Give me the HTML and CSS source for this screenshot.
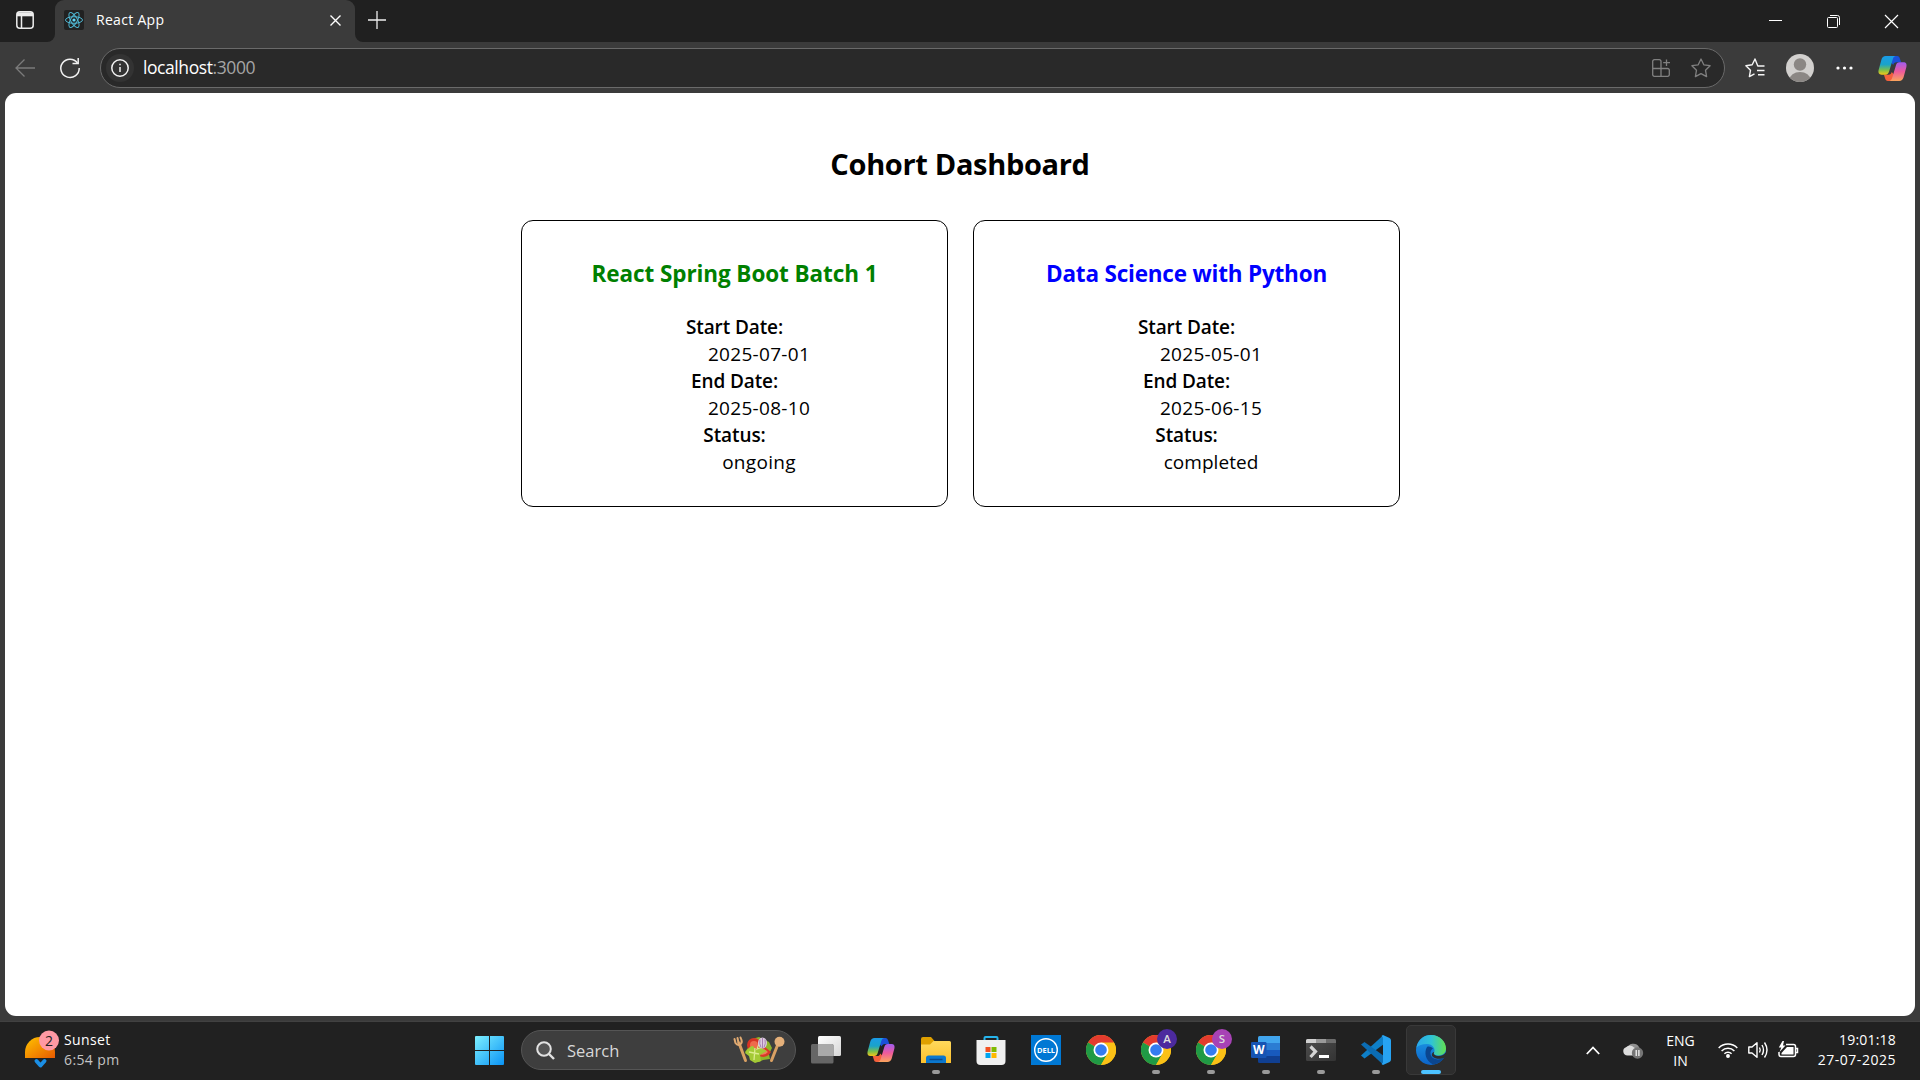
FILE: index.html
```html
<!DOCTYPE html>
<html lang="en">
<head>
<meta charset="utf-8">
<title>React App</title>
<link rel="stylesheet" href="styles.css">
</head>
<body>
<svg width="0" height="0" class="defs">
  <defs>
    <linearGradient id="cpA" x1="0" y1="0" x2="0" y2="1"><stop offset="0" stop-color="#1a9be8"/><stop offset=".45" stop-color="#1aa3c9"/><stop offset=".75" stop-color="#7cbf4a"/><stop offset="1" stop-color="#f5c518"/></linearGradient>
    <linearGradient id="cpB" x1="0" y1="0" x2="0" y2="1"><stop offset="0" stop-color="#a05cf0"/><stop offset=".5" stop-color="#ee5a9c"/><stop offset="1" stop-color="#fba45c"/></linearGradient>
    <linearGradient id="win" x1="0" y1="0" x2="1" y2="1"><stop offset="0" stop-color="#7df0ff"/><stop offset="1" stop-color="#0a93f5"/></linearGradient>
    <linearGradient id="sun" x1="0" y1="0" x2="1" y2="1"><stop offset="0" stop-color="#ffc400"/><stop offset="1" stop-color="#e85a00"/></linearGradient>
    <linearGradient id="fold" x1="0" y1="0" x2="0" y2="1"><stop offset="0" stop-color="#ffd95c"/><stop offset="1" stop-color="#fcc02c"/></linearGradient>
    <linearGradient id="edgeA" x1="0" y1="0" x2="1" y2="0"><stop offset="0" stop-color="#2aa8ea"/><stop offset=".5" stop-color="#2fc3d6"/><stop offset="1" stop-color="#63e04f"/></linearGradient>
    <linearGradient id="edgeB" x1="0" y1="0" x2="0" y2="1"><stop offset="0" stop-color="#1e9de8"/><stop offset="1" stop-color="#0c63c8"/></linearGradient>
    <linearGradient id="term" x1="0" y1="0" x2="1" y2="1"><stop offset="0" stop-color="#4e4e4e"/><stop offset="1" stop-color="#333"/></linearGradient>
    <linearGradient id="tvA" x1="0" y1="0" x2="1" y2="1"><stop offset="0" stop-color="#fff"/><stop offset="1" stop-color="#d6d6d6"/></linearGradient>
    <symbol id="copilot" viewBox="0 0 28 26">
      <path d="M14 1h4.500c1.500 0 2.200 1 2.600 2.300L22.300 7H18c-2 0-2.800 1-3.300 2.600L12.500 7z" fill="#1b50d8"/>
      <path d="M14 25H9.500C8 25 7.300 24 6.900 22.700L5.700 19H10c2 0 2.800-1 3.300-2.600L15.500 19z" fill="#f4603c"/>
      <path d="M7.500 1H17c-1.500.4-2.200 1.400-2.700 3l-3.600 12c-.6 2-1.500 3-3.500 3H3.500C.8 19 0 17 .6 14.500L3.300 4.500C4 2.200 5.300 1 7.500 1z" fill="url(#cpA)"/>
      <path d="M20.500 25H11c1.500-.4 2.200-1.400 2.700-3l3.600-12c.6-2 1.500-3 3.500-3h3.700c2.700 0 3.500 2 2.900 4.500l-2.700 10c-.7 2.300-2 3.500-4.200 3.500z" fill="url(#cpB)"/>
    </symbol>
    <symbol id="chrome" viewBox="0 0 30 30">
      <circle cx="15" cy="15" r="15" fill="#fbc116"/>
      <path d="M15 15L2 7.500A15 15 0 0 1 28 7.500z" fill="#e33b2e"/>
      <path d="M2 7.500A15 15 0 0 0 15 30L21.500 18.700 15 15z" fill="#209a45"/>
      <path d="M15 30A15 15 0 0 0 28 7.500H15L21.500 18.700z" fill="#fbc116"/>
      <circle cx="15" cy="15" r="7.500" fill="#fff"/><circle cx="15" cy="15" r="5.800" fill="#347cf0"/>
    </symbol>
  </defs>
</svg>
<div class="screen">
  <header class="tabstrip">
    <div class="workspace"><svg width="18" height="18" fill="none" stroke="#ececec" stroke-width="1.500"><rect x=".8" y=".8" width="16.400" height="16.400" rx="3"/><path d="M1 3.300h16" stroke-width="4"/><path d="M5.500 5v12"/></svg></div>
    <div class="tab-slot">
      <div class="tab">
        <svg class="favicon" width="20" height="20"><rect width="20" height="20" rx="2" fill="#212121"/><g fill="none" stroke="#4fb7d3" stroke-width="1"><ellipse cx="10" cy="10" rx="8.500" ry="3.300"/><ellipse cx="10" cy="10" rx="8.500" ry="3.300" transform="rotate(60 10 10)"/><ellipse cx="10" cy="10" rx="8.500" ry="3.300" transform="rotate(120 10 10)"/></g><circle cx="10" cy="10" r="1.600" fill="#61dafb"/></svg>
        <span class="tab-title">React App</span>
        <svg class="tab-close" width="11" height="11" stroke="#fff" stroke-width="1.400"><path d="M.5.500l10 10M10.500.500l-10 10"/></svg>
      </div>
    </div>
    <svg class="newtab" width="18" height="18" stroke="#eee" stroke-width="1.300"><path d="M9 0v18M0 9h18"/></svg>
    <div class="window-buttons">
      <svg width="13" height="13"><path d="M0 5.500h13" stroke="#fff"/></svg>
      <svg width="13" height="13" fill="none" stroke="#fff"><rect x=".5" y="2.500" width="10" height="10" rx="1"/><path d="M3 .5h7.500a2 2 0 0 1 2 2V10"/></svg>
      <svg width="13" height="13" stroke="#fff" stroke-width="1.200"><path d="M0 0l13 13M13 0L0 13"/></svg>
    </div>
  </header>
  <nav class="toolbar">
    <svg class="back" width="20" height="18" fill="none" stroke="#7b7b7b" stroke-width="1.300"><path d="M20 9H1M9.500.5L1 9l8.500 8.500"/></svg>
    <svg class="reload" width="20" height="20" fill="none" stroke="#f2f2f2" stroke-width="1.500"><path d="M17.500 5A9.200 9.200 0 1 0 19.200 10"/><path d="M18.200 0v5.500h-5.700"/></svg>
    <div class="address">
      <span class="info"><svg width="18" height="18" fill="none" stroke="#f2f2f2" stroke-width="1.500"><circle cx="9" cy="9" r="8.200"/><path d="M9 8v5M9 4.700v1.600"/></svg></span>
      <span class="url">localhost<span class="port">:3000</span></span>
      <svg class="apps" width="18" height="18" fill="none" stroke="#808080" stroke-width="1.300"><path d="M9 9.500V2.300A1.600 1.600 0 0 0 7.400.7H2.300A1.600 1.600 0 0 0 .7 2.300v13.400a1.600 1.600 0 0 0 1.600 1.600h13.400a1.600 1.600 0 0 0 1.600-1.600v-4.600a1.600 1.600 0 0 0-1.600-1.600zM.7 9.500H9v8M14.500.5v6.500M11.200 3.700H18"/></svg>
      <svg class="star" width="20" height="20" fill="none" stroke="#808080" stroke-width="1.300" stroke-linejoin="round"><path d="M10 1l2.800 5.800 6.300.9-4.600 4.500 1.100 6.400-5.600-3-5.600 3 1.100-6.400L.9 7.700l6.300-.9z"/></svg>
    </div>
    <svg class="favs" width="20" height="20" fill="none" stroke="#f5f5f5" stroke-width="1.400" stroke-linejoin="round"><path d="M19.500 8H12.800L10 1 7.200 6.800.9 7.700l4.600 4.500-1.100 6.400 5.100-2.700M12 12.500h7.500M13 16.800h6.500"/></svg>
    <svg class="avatar" width="28" height="28"><defs><clipPath id="av"><circle cx="14" cy="14" r="14"/></clipPath></defs><g clip-path="url(#av)"><rect width="28" height="28" fill="#d2d0ce"/><circle cx="14" cy="10.500" r="6.200" fill="#8b8784"/><ellipse cx="14" cy="26" rx="10.500" ry="8" fill="#8b8784"/></g></svg>
    <svg class="dots" width="17" height="4" fill="#fff"><circle cx="2" cy="2" r="1.600"/><circle cx="8.500" cy="2" r="1.600"/><circle cx="15" cy="2" r="1.600"/></svg>
    <svg class="side" width="29" height="27"><use href="#copilot" width="29" height="27"/></svg>
  </nav>
  <main class="page">
    <h1 class="title">Cohort Dashboard</h1>
    <div class="cards">
      <section class="card">
        <h3 class="ongoing">React Spring Boot Batch 1</h3>
        <dl><dt>Start Date:</dt><dd>2025-07-01</dd><dt>End Date:</dt><dd>2025-08-10</dd><dt>Status:</dt><dd>ongoing</dd></dl>
      </section>
      <section class="card">
        <h3 class="completed">Data Science with Python</h3>
        <dl><dt>Start Date:</dt><dd>2025-05-01</dd><dt>End Date:</dt><dd>2025-06-15</dd><dt>Status:</dt><dd class="tight">completed</dd></dl>
      </section>
    </div>
  </main>
  <footer class="taskbar">
    <div class="weather">
      <svg width="34" height="40"><path d="M0 28V22a15 15 0 0 1 30 0v6z" fill="url(#sun)"/><path d="M11.500 31l4 4.500 4-4.500" fill="none" stroke="#1b8fe6" stroke-width="4" stroke-linecap="round" stroke-linejoin="round"/><circle cx="24" cy="10.500" r="10" fill="#ff99a4"/><text x="24" y="15.500" text-anchor="middle" class="badge">2</text></svg>
      <div class="forecast"><p>Sunset</p><p class="dim">6:54 pm</p></div>
    </div>
    <svg class="start" width="29" height="29" fill="url(#win)"><path d="M1 0H14V14H0V1a1 1 0 0 1 1-1zM15 0H28a1 1 0 0 1 1 1V14H15zM0 15H14V29H1a1 1 0 0 1-1-1zM15 15H29V28a1 1 0 0 1-1 1H15z"/></svg>
    <div class="search">
      <svg width="19" height="19" fill="none" stroke="#e2e2e2"><circle cx="8" cy="8" r="6.800" stroke-width="2" fill="#555"/><path d="M13 13l5 5" stroke-width="2.400"/></svg>
      <span>Search</span>
      <svg class="salad" width="52" height="28"><g fill="none" stroke-linecap="round"><path d="M6 7l6.500 17.500" stroke="#d9a063" stroke-width="3"/><path d="M45 8l-6.500 16.500" stroke="#d9a063" stroke-width="3"/><path d="M1.500 3l1 4q2 3 4.500 1.500 2.500-1.500 1.500-4.500L7.500 1.500M4.500 2l1 5" stroke="#e0aa72" stroke-width="2"/></g><circle cx="46.500" cy="5.800" r="5" fill="#e5b07a"/><path d="M12 16l5-7 2-6 7-2 6 3 4 2 3 6-3 6 1 5-7 1-4 2h-5l-3-5z" fill="#8fb52a"/><circle cx="21" cy="9" r="7" fill="#d63324"/><circle cx="21" cy="9" r="4" fill="#ee6a4c"/><path d="M24 19q9 5 14-3l-7-6z" fill="#d93a28"/><path d="M26 18q6 2 9-2l-4-3z" fill="#f17a5c"/><path d="M12 17q5-8 8-7l3 4 5-2 6 3-7 4 1 6-6 2-5-3-1-4z" fill="#a3ca35"/><path d="M16 16l10 2M22 12l-1 12M28 3l-4 10 8-3" stroke="#dcec8e" stroke-width="1.300" fill="none"/><ellipse cx="29.500" cy="7" rx="4.500" ry="5.500" fill="#dccbe0"/><path d="M29.500 2v10M27 3.500q-1 4 1 8M32 3.500q1 4-1 8" stroke="#9b6aa8" stroke-width=".8" fill="none"/></svg>
    </div>
    <div class="apps-row">
      <div class="app"><svg width="30" height="30"><rect x="7" y="1" width="23" height="20" rx="1.500" fill="url(#tvA)"/><rect x="0" y="9" width="22.500" height="19.500" rx="1.500" fill="#666"/><path d="M7 9h14a1.500 1.500 0 0 1 1.500 1.500V21H7z" fill="#a9a9a9"/></svg></div>
      <div class="app"><svg width="30" height="30"><use href="#copilot" x="1" y="2" width="28" height="26"/></svg></div>
      <div class="app on"><svg width="30" height="30"><path d="M0 4a2 2 0 0 1 2-2h8l3.500 4H28v6H0z" fill="#dfa000"/><path d="M0 9.500h9l3.500-3.500H28.500A1.500 1.500 0 0 1 30 7.500v20.500H0z" fill="url(#fold)"/><path d="M5 28v-5a2.500 2.500 0 0 1 2.500-2.500h15A2.500 2.500 0 0 1 25 23v5z" fill="#0b78cf"/><path d="M8.500 24.500h13" stroke="#0a4a8c" stroke-width="1.500"/></svg></div>
      <div class="app"><svg width="30" height="30"><path d="M8.500 6V3a1 1 0 0 1 1-1h11a1 1 0 0 1 1 1v3" fill="none" stroke="#26b4ec" stroke-width="2"/><path d="M.500 5h29v21a4 4 0 0 1-4 4h-21a4 4 0 0 1-4-4z" fill="#f0f0f0"/><path d="M9.500 12h5v5h-5z" fill="#f25022"/><path d="M15.500 12h5v5h-5z" fill="#7fba00"/><path d="M9.500 18h5v5h-5z" fill="#00a4ef"/><path d="M15.500 18h5v5h-5z" fill="#ffb900"/></svg></div>
      <div class="app"><svg width="30" height="30"><rect width="30" height="30" fill="#0078d4"/><circle cx="15" cy="15" r="11.300" fill="none" stroke="#fff" stroke-width="1.400"/><text x="15" y="17.500" text-anchor="middle" class="dell" textLength="18" lengthAdjust="spacingAndGlyphs">DELL</text></svg></div>
      <div class="app"><svg width="30" height="30"><use href="#chrome" width="30" height="30"/></svg></div>
      <div class="app on"><svg width="30" height="30"><use href="#chrome" width="30" height="30"/><circle cx="26" cy="4" r="10" fill="#4c2a9e"/><text x="26" y="8" text-anchor="middle" class="profile">A</text></svg></div>
      <div class="app on"><svg width="30" height="30"><use href="#chrome" width="30" height="30"/><circle cx="26" cy="4" r="10" fill="#a742b5"/><text x="26" y="8" text-anchor="middle" class="profile">S</text></svg></div>
      <div class="app on"><svg width="30" height="30"><path d="M7 2.500A1.500 1.500 0 0 1 8.500 1H29v7H7z" fill="#41a5ee"/><path d="M7 8h22v7H7z" fill="#2b7cd3"/><path d="M7 15h22v6H7z" fill="#185abd"/><path d="M7 21h22v7H8.500A1.500 1.500 0 0 1 7 26.500z" fill="#103f91"/><rect x="0" y="7" width="15.500" height="16" rx="1.300" fill="#1654b3"/><text x="7.700" y="19" text-anchor="middle" class="word">W</text></svg></div>
      <div class="app on"><svg width="30" height="30"><rect x="0" y="4" width="30" height="22" rx="1.500" fill="url(#term)"/><path d="M0 8V5.500A1.500 1.500 0 0 1 1.500 4H10v4z" fill="#d0d0d0"/><path d="M10 4h10v4H10z" fill="#9a9a9a"/><path d="M20 4h8.500A1.500 1.500 0 0 1 30 5.500V8H20z" fill="#6c6c6c"/><path d="M4.500 11.500l5 5-5 5.500" fill="none" stroke="#d4d4d4" stroke-width="3.200"/><path d="M13 21.500h10" stroke="#fff" stroke-width="3"/></svg></div>
      <div class="app on"><svg width="30" height="30"><path d="M22 .500L23 9 3.500 23.500 0 20.500z" fill="#0e7fc8"/><path d="M22 29.500L23 21 3.500 7 0 9.500z" fill="#0b6cb3"/><path d="M22 0l6.500 3Q30 3.800 30 5.500v19q0 1.700-1.500 2.500L22 30l-1.500-1 1.500-1.500v-25L20.500 1z" fill="#27a3f2"/></svg></div>
      <div class="app on active"><svg width="30" height="30"><circle cx="15" cy="15" r="15" fill="url(#edgeB)"/><path d="M0.500 12.500C2 4.500 8 0 15 0c9 0 15 6.500 15 13.500 0 4.500-3.500 7-7.500 7-3.500 0-5-1.300-4.500-2.500 2-4.500-1.500-8.800-7-9-5 0-8.500 1.500-10.500 3.500z" fill="url(#edgeA)"/><path d="M11 12c-3 5-2 13.500 6 17.500 5-.5 9-3.500 11.500-7-6 3.500-13 2-14-3.500-.4-2.500.8-4.500 2.500-5.500-1.500-1.800-4.500-2.500-6-1.500z" fill="#0b468f"/><path d="M18.200 17c-1.500 2.300 1 4 4.300 4 3.500 0 6-1.500 7-3.500l1 1-1.700 4c-3.500 2-9.800 1.800-12.300-1-1.500-2 0-4.500 1.700-4.500z" fill="#2d2d2d"/></svg></div>
    </div>
    <div class="tray">
      <svg class="chev" width="14" height="9" fill="none" stroke="#fff" stroke-width="1.800"><path d="M.8 8L7 1.500 13.200 8"/></svg>
      <svg class="cloud" width="20" height="18"><path d="M4 8a6.500 6.500 0 0 1 12-2q1.500 2 .5 5H5z" fill="#8f8f8f"/><path d="M4.500 14.500A4.300 4.300 0 0 1 3 6.200 6 6 0 0 1 9 5l7 5-4 4.500z" fill="#dcdcdc"/><circle cx="14.500" cy="12" r="5.700" fill="#757575"/><path d="M13.200 9v6M15.900 9v6" stroke="#fff" stroke-width="1.200"/></svg>
      <div class="lang"><p>ENG</p><p>IN</p></div>
      <svg class="wifi" width="20" height="16" fill="none" stroke="#fff" stroke-width="1.500"><path d="M.7 6a13 13 0 0 1 18.600 0M3.600 9a9 9 0 0 1 12.800 0M6.400 11.800a5 5 0 0 1 7.200 0"/><circle cx="10" cy="14" r="1.200" fill="#fff"/></svg>
      <svg class="vol" width="20" height="18" fill="none" stroke="#fff" stroke-width="1.400"><path d="M.8 6v6H4l5 4.300V1.700L4 6z" stroke-linejoin="round"/><path d="M11.500 6.500q1.500 2.500 0 5M14 4q3 5 0 10M16.500 1.500q5 7.500 0 15"/></svg>
      <svg class="bat" width="21" height="18" fill="none" stroke="#fff" stroke-width="1.500"><path d="M8 3.500h7.500a2 2 0 0 1 2 2v8a2 2 0 0 1-2 2H3a2 2 0 0 1-2-2V11"/><path d="M18 7.500h1.500v4H18"/><path d="M3.500 13.500V12L9 6h6.500v7.500z" fill="#fff" stroke="none"/><path d="M4.500 0L.8 6.500h2.500L1.500 11l6-6.500H5L6 0z" fill="#fff" stroke="none"/></svg>
      <div class="clock"><p class="time">19:01:18</p><p class="date">27-07-2025</p></div>
    </div>
  </footer>
</div>
</body>
</html>
```
FILE: styles.css
```css
* { box-sizing: border-box; }
body { margin: 0; font-family: "Open Sans", "Noto Sans", sans-serif; }
p, h1, h3, dl, dd { margin: 0; }
svg { display: block; flex: none; overflow: visible; }
.defs { position: absolute; }
.screen { width: 1920px; height: 1080px; display: flex; flex-direction: column; background: #3b3b3b; overflow: hidden; }

.tabstrip { height: 42px; flex: none; display: flex; background: #3b3b3b; color: #fff; }
.workspace { width: 55px; padding: 11px 0 0 16px; background: #202020; border-radius: 0 0 8px 0; }
.tab-slot { width: 300px; background: linear-gradient(#202020 20px, #3b3b3b 20px); }
.tab { height: 42px; display: flex; align-items: center; padding: 0 14px 2px 9px; border-radius: 9px 9px 0 0; background: #3b3b3b; }
.tab-title { margin-left: 12px; padding-bottom: 1px; font-size: 14px; letter-spacing: .3px; }
.tab-close { margin-left: auto; }
.tabstrip .newtab { box-sizing: content-box; padding: 11px 0 13px 13px; background: #202020; border-radius: 0 0 0 8px; }
.window-buttons { flex: 1; display: flex; justify-content: flex-end; gap: 45px; padding: 15px 22px 0 0; background: #202020; }

.toolbar { height: 51px; flex: none; display: flex; align-items: center; padding: 1px 13px 0 15px; }
.reload { margin-left: 25px; }
.address { width: 1625px; height: 40px; margin-left: 20px; display: flex; align-items: center; padding: 0 13px 0 5px; border: 1px solid #6a6a6a; border-radius: 20px; background: #292929; }
.info { width: 28px; height: 28px; display: grid; place-items: center; border-radius: 50%; background: #333; }
.url { margin-left: 9px; padding-bottom: 2px; font-size: 17.500px; letter-spacing: -.42px; color: #fff; }
.port { color: #a5a5a5; }
.apps { margin-left: auto; }
.star { margin-left: 21px; }
.favs { margin-left: 20px; }
.avatar { margin-left: 21px; }
.dots { margin-left: 22px; }
.side { margin-left: 25px; }

.page { flex: none; height: 923px; margin: 0 5px 5px; padding-top: 51px; border-radius: 11px; background: #fff; color: #000; }
.title { font-size: 29px; line-height: 40px; font-weight: 700; letter-spacing: -.33px; text-align: center; }
.cards { display: flex; justify-content: center; gap: 25px; padding: 36px 0 0 1px; }
.card { width: 427px; height: 287px; padding-top: 37px; border: 1px solid #000; border-radius: 12px; text-align: center; }
.card h3 { font-size: 22.500px; line-height: 31px; font-weight: 700; }
.card .ongoing { color: #008000; letter-spacing: -.09px; }
.card .completed { color: #00f; letter-spacing: -.2px; }
.card dl { margin-top: 25px; font-size: 19px; line-height: 27px; }
.card dt { font-weight: 600; letter-spacing: -.1px; }
.card dd { padding-left: 49px; letter-spacing: .3px; }
.card .tight { letter-spacing: .05px; }

.taskbar { height: 59px; flex: none; display: flex; align-items: center; padding-bottom: 2px; background: #212121; border-top: 1px solid #414141; color: #fff; font-size: 14px; line-height: 20px; }
.weather { width: 475px; display: flex; align-items: center; gap: 5px; padding-left: 25px; }
.forecast { letter-spacing: .38px; }
.dim { color: #c4c4c4; }
.badge { font-size: 14px; fill: #222; }
.search { width: 275px; height: 40px; margin-left: 17px; display: flex; align-items: center; padding: 0 10px 0 14px; border: 1px solid #555; border-radius: 20px; background: #3e3e3e; color: #d8d8d8; font-size: 16.500px; }
.search span { margin-left: 12px; padding-top: 1px; }
.salad { margin-left: auto; }
.apps-row { display: flex; padding-left: 2.500px; }
.app { position: relative; width: 55px; height: 50px; display: grid; place-items: center; }
.on::after { content: ""; position: absolute; left: 23.500px; bottom: 1px; width: 8px; height: 4px; border-radius: 2px; background: #9a9a9a; }
.active::before { content: ""; position: absolute; inset: 0 2.500px; border: 1px solid #393939; border-radius: 5px; background: #2d2d2d; }
.active svg { position: relative; }
.active::after { left: 17.500px; width: 20px; background: #4cc2ff; }
.dell { font: 700 7px "Open Sans", sans-serif; fill: #fff; }
.profile { font: 600 11.500px "Open Sans", sans-serif; fill: #ddd; }
.word { font: 700 12px "Open Sans", sans-serif; fill: #fff; }
.tray { flex: 1; display: flex; align-items: center; padding-right: 24px; }
.chev { margin-left: 127px; }
.cloud { margin-left: 23px; }
.lang { width: 30px; margin-left: 23px; padding-top: 2px; text-align: center; }
.wifi { margin-left: 22px; }
.vol { margin-left: 10px; }
.bat { margin-left: 10px; }
.clock { margin-left: auto; text-align: right; }
.time { letter-spacing: .2px; }
.date { letter-spacing: .52px; }
```
